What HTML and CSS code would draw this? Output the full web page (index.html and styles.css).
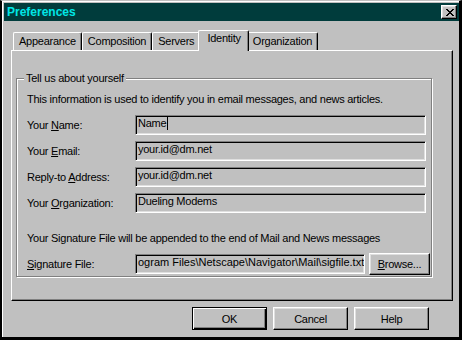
FILE: index.html
```html
<!DOCTYPE html>
<html lang="en">
<head>
  <meta charset="UTF-8">
  <title>Preferences</title>
  <link rel="stylesheet" href="styles.css">
</head>
<body>

  <div class="window">
    <div class="titlebar">
      <span class="title">Preferences</span>
      <button class="close" type="button">
        <svg width="8" height="7" viewBox="0 0 8 7" shape-rendering="crispEdges">
          <path d="M0 0h2v1H0z M6 0h2v1H6z M1 1h2v1H1z M5 1h2v1H5z M2 2h4v1H2z M3 3h2v1H3z M2 4h4v1H2z M1 5h2v1H1z M5 5h2v1H5z M0 6h2v1H0z M6 6h2v1H6z" fill="#000"/>
        </svg>
      </button>
    </div>

    <div class="content">
      <div class="tabs">
        <div class="tab">Appearance</div>
        <div class="tab">Composition</div>
        <div class="tab">Servers</div>
        <div class="tab active">Identity</div>
        <div class="tab">Organization</div>
      </div>

      <div class="panel">
        <div class="group">
          <div class="group-title">Tell us about yourself</div>
          <p class="intro">This information is used to identify you in email messages, and news articles.</p>

          <div class="rows">
            <span class="label">Your <u>N</u>ame:</span>
            <div class="field">Name<span class="caret"></span></div>

            <span class="label">Your <u>E</u>mail:</span>
            <div class="field">your.id@dm.net</div>

            <span class="label">Reply-to <u>A</u>ddress:</span>
            <div class="field">your.id@dm.net</div>

            <span class="label">Your <u>O</u>rganization:</span>
            <div class="field">Dueling Modems</div>
          </div>

          <p class="sig-note">Your Signature File will be appended to the end of Mail and News messages</p>

          <div class="sig-row">
            <span class="label"><u>S</u>ignature File:</span>
            <div class="field sig-field">ogram Files\Netscape\Navigator\Mail\sigfile.txt</div>
            <button class="btn browse" type="button"><u>B</u>rowse...</button>
          </div>
        </div>
      </div>

      <div class="buttons">
        <button class="btn default" type="button">OK</button>
        <button class="btn" type="button">Cancel</button>
        <button class="btn" type="button">Help</button>
      </div>
    </div>
  </div>

</body>
</html>
```

FILE: styles.css
```css
html, body {
  margin: 0;
  padding: 0;
  background-color: #000;
}

body {
  font-family: 'Liberation Sans', Arial, sans-serif;
  font-size: 11px;
  line-height: 13px;
  letter-spacing: -0.25px;
  color: #000;
}

u {
  text-decoration: underline;
  text-underline-offset: 1px;
}

.window {
  width: 462px;
  height: 340px;
  box-sizing: border-box;
  background-color: #c0c0c0;
  border-style: solid;
  border-width: 1px 3px 3px 2px;
  border-color: #c0c0c0 #000 #000 #000;
  box-shadow: inset 1px 1px #fff;
  padding: 2px 0 0 2px;
}

/* title bar */
.titlebar {
  height: 18px;
  background-color: #003c3c;
  display: flex;
  align-items: center;
  justify-content: space-between;
  padding: 0 2px 0 3px;
}

.title {
  color: #00e6e6;
  font-weight: bold;
  font-size: 12px;
  letter-spacing: 0;
}

.close {
  width: 16px;
  height: 14px;
  padding: 0 0 0 1px;
  margin: 0;
  box-sizing: border-box;
  background-color: #c0c0c0;
  border: 1px solid;
  border-color: #fff #000 #000 #fff;
  box-shadow: inset -1px -1px #808080, inset 1px 1px #dfdfdf;
  display: flex;
  align-items: center;
  justify-content: center;
}

.close svg {
  display: block;
}

/* tabs */
.content {
  padding: 9px 0 0 7px;
}

.tabs {
  display: flex;
  align-items: flex-end;
  height: 20px;
  padding-left: 2px;
}

.tab {
  height: 18px;
  box-sizing: border-box;
  padding: 2px 5px 0 5px;
  border-top: 1px solid #fff;
  border-left: 1px solid #fff;
  border-right: 1px solid #000;
  border-radius: 2px 2px 0 0;
  box-shadow: inset -1px 0 #808080;
  background-color: #c0c0c0;
}

.tab.active {
  position: relative;
  z-index: 1;
  height: 21px;
  margin: 0 -2px -1px -2px;
  padding: 1px 7px 0 8px;
}

.panel {
  width: 442px;
  height: 251px;
  box-sizing: border-box;
  border: 1px solid;
  border-color: #fff #000 #000 #fff;
  box-shadow: inset -1px -1px #808080;
  padding: 27px 0 0 4px;
}

/* group box */
.group {
  width: 416px;
  height: 199px;
  box-sizing: border-box;
  border: 1px solid #808080;
  box-shadow: inset 1px 1px #fff, 1px 1px #fff;
  padding: 0 0 0 10px;
}

.group-title {
  width: max-content;
  margin: -7px 0 0 -3px;
  padding: 0 2px;
  background-color: #c0c0c0;
}

.intro {
  margin: 8px 0 0 0;
}

.rows {
  display: grid;
  grid-template-columns: 108px 291px;
  grid-auto-rows: 20px;
  row-gap: 6px;
  align-items: center;
  margin-top: 9px;
}

.label {
  padding-top: 1px;
}

.field {
  height: 20px;
  box-sizing: border-box;
  padding: 1px 2px;
  border: 1px solid;
  border-color: #808080 #fff #fff #808080;
  box-shadow: inset 1px 1px #000, inset -1px -1px #dfdfdf;
  background-color: #c0c0c0;
  white-space: nowrap;
  overflow: hidden;
}

.sig-field {
  letter-spacing: 0;
}

.caret {
  display: inline-block;
  width: 1px;
  height: 13px;
  margin-left: 1px;
  vertical-align: top;
  background-color: #000;
}

.sig-note {
  margin: 19px 0 0 0;
}

.sig-row {
  display: grid;
  grid-template-columns: 108px 230px 61px;
  align-items: center;
  margin-top: 8px;
}

/* buttons */
.btn {
  height: 23px;
  width: 75px;
  margin: 0;
  padding: 0;
  box-sizing: border-box;
  font-family: inherit;
  font-size: 11px;
  letter-spacing: -0.25px;
  color: #000;
  background-color: #c0c0c0;
  border: 1px solid;
  border-color: #fff #000 #000 #fff;
  box-shadow: inset -1px -1px #808080, inset 1px 1px #dfdfdf;
}

.btn.default {
  border-color: #000;
  box-shadow: inset 1px 1px #fff, inset -1px -1px #000, inset -2px -2px #808080;
}

.browse {
  width: 61px;
  height: 22px;
  margin-left: 4px;
}

.buttons {
  display: flex;
  justify-content: flex-end;
  gap: 6px;
  margin-top: 6px;
  width: 418px;
}
```
